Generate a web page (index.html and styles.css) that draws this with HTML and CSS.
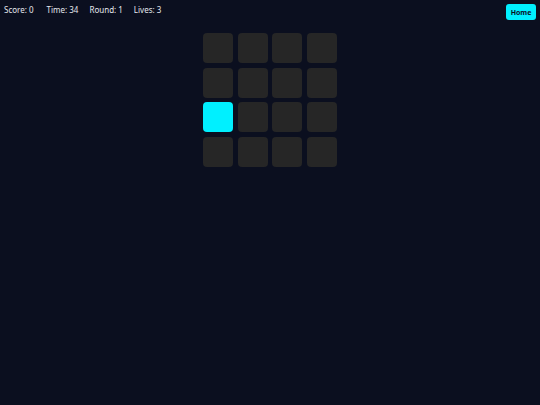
FILE: index.html
```html
<!DOCTYPE html>
<html lang="en">

<head>
    <meta charset="UTF-8">
    <meta name="viewport" content="width=device-width, initial-scale=1.0">
    <title>Memory Grid</title>
    <link rel="stylesheet" href="styles.css">
</head>

<body>
    <!-- top bar -->
    <div class="top-bar">
        <div class="stats">
            <span id="score">Score: 0</span>
            <span id="time">Time: 34</span>
            <span id="round">Round: 1</span>
            <span id="lives">Lives: 3</span>
        </div>
        <button class="home-button">Home</button>
    </div>

    <!-- game board -->
    <div class="board" id="board"></div>

    <script>
        const board = document.getElementById('board');
        const lit = 8;

        for (let i = 0; i < 16; i++) {
            const tile = document.createElement('div');
            tile.className = 'tile';
            if (i === lit) {
                tile.classList.add('active');
            }
            board.appendChild(tile);
        }
    </script>
</body>

</html>
```

FILE: styles.css
```css
body {
    font-family: "Noto Sans", "Open Sans", sans-serif;
    background-color: #0b0f1f;
    color: #e6e8ee;
    margin: 0;
    padding: 0;
    min-height: 100vh;
    overflow: hidden;
}

.top-bar {
    display: flex;
    justify-content: space-between;
    align-items: flex-start;
    padding: 4px 4px 0 4px;
}

.stats {
    display: flex;
    gap: 11px;
    font-size: 8px;
    line-height: 10px;
    padding-top: 1px;
}

.stats #score {
    margin-right: 2px;
}

.home-button {
    background-color: #00f0ff;
    color: #0b0f1f;
    font-family: "Noto Sans", sans-serif;
    font-weight: bold;
    font-size: 7px;
    width: 30px;
    height: 16px;
    padding: 0;
    border: none;
    border-radius: 3px;
    cursor: pointer;
}

.board {
    display: grid;
    grid-template-columns: repeat(4, 30px);
    grid-auto-rows: 30px;
    gap: 4.7px;
    justify-content: center;
    margin-top: 13px;
}

.tile {
    background-color: #262626;
    border-radius: 4px;
}

.tile.active {
    background-color: #00f0ff;
}
```
